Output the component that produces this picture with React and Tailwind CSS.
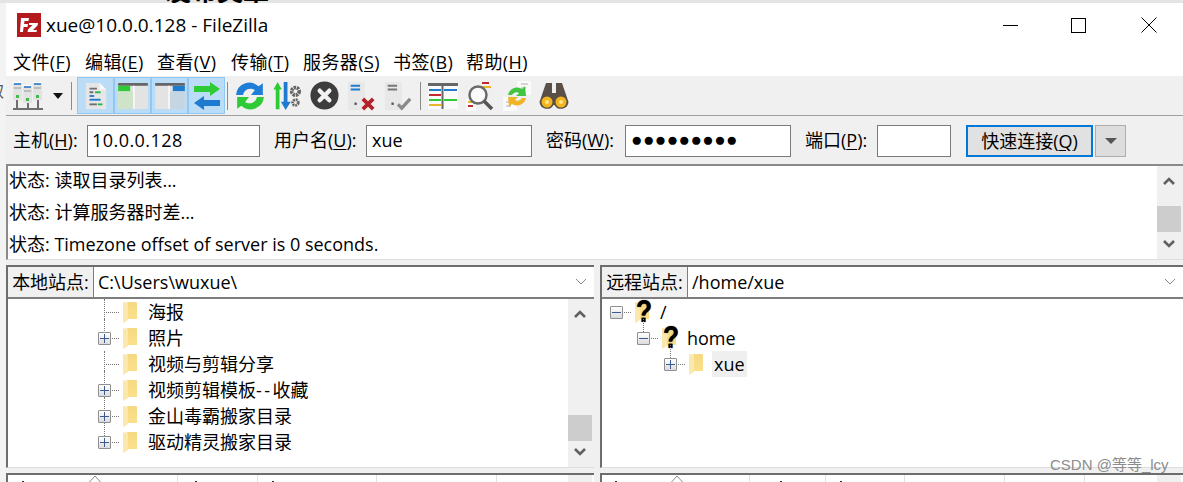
const CJK = "font-['Open_Sans','Noto_Sans_CJK_SC',sans-serif]";

function U({ children }) {
  return <span className="underline underline-offset-2">{children}</span>;
}

function Folder({ question }) {
  return (
    <span className="relative block h-[22px] w-[16px] shrink-0">
      <svg width="16" height="22" viewBox="0 0 16 22" className="block">
        <defs>
          <linearGradient id="fb" x1="0" y1="0" x2="0" y2="1">
            <stop offset="0" stopColor="#f6d982" />
            <stop offset="1" stopColor="#fbe08c" />
          </linearGradient>
        </defs>
        <path d="M4 1h9.500l.500.500V18H4z" fill="url(#fb)" />
        <path d="M0 1l5 1V19l-5 3z" fill="#fbe8ad" />
      </svg>
      {question && (
        <span className="absolute left-[1px] top-[-5px] origin-left scale-x-[0.85] font-['Liberation_Sans',sans-serif] text-[31px] font-bold leading-[31px] text-black [text-shadow:0_0_1px_#000]">?</span>
      )}
    </span>
  );
}

function Box({ plus }) {
  return (
    <span className="relative block h-[13px] w-[13px] shrink-0 rounded-[1px] border border-[#8f8f8f] bg-gradient-to-b from-white to-[#dcdcdc]">
      <span className="absolute left-[1px] top-[5px] h-px w-[9px] bg-[#3b5a94]" />
      {plus && <span className="absolute left-[5px] top-[1px] h-[9px] w-px bg-[#3b5a94]" />}
    </span>
  );
}

function TreeRow({ indent, expander, text, question, selected, vUp, vDown }) {
  return (
    <div className="relative flex h-[26px] items-center" style={{ paddingLeft: indent }}>
      <span className="relative flex w-[25px] shrink-0 items-center">
        {(vUp || vDown) && (
          <span
            className="absolute left-[6px] h-[26px] border-l border-dotted border-[#777]"
            style={{ top: vUp ? -13 : 0, height: vUp && vDown ? 26 : 13 }}
          />
        )}
        {expander ? (
          <span className="relative z-10 flex items-center">
            <Box plus={expander === "plus"} />
            <span className="ml-px w-[7px] border-t border-dotted border-[#777]" />
          </span>
        ) : (
          <span className="ml-[6px] w-[15px] border-t border-dotted border-[#777]" />
        )}
      </span>
      <Folder question={question} />
      <span className={`ml-[7px] flex h-[26px] items-center whitespace-nowrap px-[2px] text-[18px] text-black ${selected ? "bg-[#efefef]" : ""}`}>
        {text}
      </span>
    </div>
  );
}

function Chevron({ up, small }) {
  return (
    <svg width="14" height="10" viewBox="0 0 14 10">
      <path d={up ? "M2 8 7 3l5 5" : "M2 2l5 5 5-5"} fill="none" stroke={small ? "#8a8a8a" : "#606060"} strokeWidth={small ? 1 : 2.6} />
    </svg>
  );
}

function VScroll({ thumbTop, h }) {
  return (
    <div className="flex w-6 shrink-0 flex-col items-center justify-between bg-[#f0f0f0] py-[10px]" style={{ height: h }}>
      <Chevron up />
      <span className="absolute h-[26px] w-6 bg-[#cdcdcd]" style={{ top: thumbTop }} />
      <Chevron />
    </div>
  );
}

function Input({ w, children, className = "" }) {
  return (
    <div className={`flex h-8 shrink-0 items-center border border-[#7a7a7a] bg-white px-[5px] pb-[2px] text-[18px] text-black ${className}`} style={{ width: w }}>
      {children}
    </div>
  );
}

function Label({ w, children }) {
  return (
    <span className="mb-[2px] shrink-0 whitespace-nowrap text-[18px] text-black" style={{ width: w }}>
      {children}
    </span>
  );
}

function SiteManager() {
  return (
    <svg width="32" height="32" viewBox="0 0 32 32">
      {[[1, 2], [11, 5], [21, 2]].map(([x, y], i) => (
        <g key={i}>
          <rect x={x} y={y} width="9" height="18" fill="#e2e2e2" />
          <rect x={x} y={y} width="9" height="1" fill="#fff" />
          <rect x={x + 1} y={y + 1} width="7" height="2" fill="#4f8ccb" />
          <rect x={x + 1} y={y + 5} width="7" height="2" fill="#bdbdbd" />
          <rect x={x + 3} y={y + 13} width="3" height="3" fill="#3fbb4a" />
        </g>
      ))}
      <path d="M1 29h30M5 20v9M16 23v6M26 20v9" stroke="#6e6e6e" strokeWidth="2" fill="none" />
    </svg>
  );
}

function Msg() {
  return (
    <svg width="26" height="30" viewBox="0 0 28 32">
      <path d="M3 2h15l7 7v21H3z" fill="#e6e6e6" />
      <path d="M18 2l7 7h-7z" fill="#fafafa" />
      <path d="M7 8h8M7 12h4" stroke="#6e6e6e" strokeWidth="2" />
      <path d="M13 12h6" stroke="#25b44a" strokeWidth="2" />
      <path d="M7 16h5" stroke="#1d7bd0" strokeWidth="2" />
      <path d="M7 20h12" stroke="#1d7bd0" strokeWidth="2" />
      <path d="M7 25h8" stroke="#6e6e6e" strokeWidth="2" />
      <path d="M16 25h5" stroke="#25b44a" strokeWidth="2" />
    </svg>
  );
}

function Pane({ kind }) {
  return (
    <svg width="30" height="26" viewBox="0 0 32 28">
      <rect x="0" y="0" width="32" height="28" rx="1" fill="#e3e3e3" />
      <rect x="0" y="0" width="32" height="3" fill="#666" />
      {kind === "left" ? (
        <>
          <rect x="0" y="3" width="13" height="6" fill="#2ecb37" />
          <rect x="0" y="9" width="16" height="19" fill="#cfe3c9" />
          <rect x="16" y="3" width="2" height="25" fill="#f6f6f6" />
        </>
      ) : (
        <>
          <rect x="19" y="3" width="13" height="6" fill="#1d7bd0" />
          <rect x="16" y="9" width="16" height="19" fill="#c6d5e2" />
          <rect x="14" y="3" width="2" height="25" fill="#f6f6f6" />
        </>
      )}
    </svg>
  );
}

function Transfer() {
  return (
    <svg width="30" height="28" viewBox="0 0 30 28">
      <path d="M2 4h16V0l10 7-10 7v-4H2z" fill="#2ecb37" />
      <path d="M28 18H12v-4L2 21l10 7v-4h16z" fill="#1d7bd0" />
    </svg>
  );
}

function Refresh() {
  return (
    <svg width="30" height="30" viewBox="2 2 28 28">
      <path d="M3 15A12.500 12.500 0 0 1 24 7l4-3v11H17l3.500-4.500a7 7 0 0 0-11 4.500z" fill="#1f7fd8" />
      <path d="M29 17A12.500 12.500 0 0 1 8 25l-4 3V17h11l-3.500 4.500a7 7 0 0 0 11-4.500z" fill="#2ecb37" />
    </svg>
  );
}

function SyncGears() {
  return (
    <svg width="30" height="30" viewBox="0 0 32 32">
      <path d="M6 1l4.500 8H8v21H4V9H1.500z" fill="#2ecb37" />
      <path d="M12.500 1h4v21H20l-5.500 9L9.500 22h3z" fill="#1d7bd0" />
      <circle cx="25" cy="11" r="4" fill="none" stroke="#666" strokeWidth="4" strokeDasharray="2.500 .8" />
      <circle cx="25" cy="23" r="3" fill="none" stroke="#666" strokeWidth="3" strokeDasharray="2 .8" />
    </svg>
  );
}

function Cancel() {
  return (
    <svg width="29" height="29" viewBox="0 0 30 30">
      <circle cx="15" cy="15" r="14.500" fill="#3d3d3d" />
      <path d="M10 10l10 10M20 10 10 20" stroke="#f2f2f2" strokeWidth="4.500" strokeLinecap="round" />
    </svg>
  );
}

function DocMark({ bar, mark }) {
  return (
    <svg width="30" height="30" viewBox="0 0 30 32">
      <path d="M1 1h18v30H1z" fill="#e8e8e8" />
      <path d="M4 5h10M4 9h10" stroke={bar} strokeWidth="2" />
      <rect x="8" y="23" width="2.500" height="2.500" fill="#555" />
      {mark === "x" ? (
        <path d="M17 19l11 11M28 19 17 30" stroke="#b3222b" strokeWidth="4" />
      ) : (
        <path d="M15 25l4 4 9-10" stroke="#8a8a8a" strokeWidth="3.500" fill="none" />
      )}
    </svg>
  );
}

function Filter() {
  return (
    <svg width="30" height="28" viewBox="0 0 30 28">
      <rect x="0" y="1" width="30" height="26" fill="#fafafa" />
      <rect x="0" y="1" width="30" height="3" fill="#666" />
      <path d="M1 8h12" stroke="#1d7bd0" strokeWidth="2" />
      <path d="M1 13h12" stroke="#c4282f" strokeWidth="2" />
      <path d="M1 18h12" stroke="#2ecb37" strokeWidth="2" />
      <path d="M1 23h12" stroke="#eab52b" strokeWidth="2" />
      <path d="M16 8h13" stroke="#1d7bd0" strokeWidth="2" />
      <path d="M16 18h13" stroke="#2ecb37" strokeWidth="2" />
      <path d="M14.500 4v23" stroke="#666" strokeWidth="2" />
    </svg>
  );
}

function Search() {
  return (
    <svg width="30" height="32" viewBox="0 0 30 32">
      <rect x="14" y="1" width="14" height="14" fill="#efefef" />
      <path d="M17 3h7" stroke="#c4282f" strokeWidth="2" />
      <path d="M17 7h9" stroke="#eab52b" strokeWidth="2" />
      <rect x="1" y="19" width="10" height="12" fill="#fafafa" />
      <path d="M3 22h5" stroke="#eab52b" strokeWidth="2" />
      <path d="M3 26h5" stroke="#c4282f" strokeWidth="2" />
      <circle cx="13" cy="15" r="8.500" fill="#fff" fillOpacity=".7" stroke="#6a6a6a" strokeWidth="2.500" />
      <path d="M19 21l8 8" stroke="#555" strokeWidth="3.500" />
    </svg>
  );
}

function SyncBrowse() {
  return (
    <svg width="30" height="32" viewBox="0 0 30 32">
      <rect x="15" y="1" width="14" height="14" fill="#fafafa" />
      <rect x="1" y="17" width="14" height="14" fill="#fafafa" />
      <path d="M19 4h7M19 8h5M4 22h7M4 26h5" stroke="#c9c9c9" strokeWidth="1.500" />
      <path d="M6 15A9 9 0 0 1 20 9l3-3 1 10H14l3-3a5 5 0 0 0-7 2z" fill="#43c443" />
      <path d="M24 18a9 9 0 0 1-14 6l-3 3-1-10h10l-3 3a5 5 0 0 0 7-2z" fill="#f0b429" />
    </svg>
  );
}

function Binoculars() {
  return (
    <svg width="30" height="28" viewBox="0 0 30 28">
      <path d="M7 1h6v10h4V1h6l6.500 19a7.500 7.500 0 0 1-14 3h-1a7.500 7.500 0 0 1-14-3z" fill="#5b5048" />
      <circle cx="8" cy="20" r="5.500" fill="#f3b61f" />
      <circle cx="22" cy="20" r="5.500" fill="#f3b61f" />
      <circle cx="8" cy="20" r="2" fill="#fde38a" />
      <circle cx="22" cy="20" r="2" fill="#fde38a" />
    </svg>
  );
}

function Sep() {
  return <span className="block h-[28px] w-px shrink-0 bg-[#8a8a8a]" />;
}

function Lit({ children }) {
  return (
    <span className="flex h-[37px] w-[37px] items-center justify-center border border-[#8fc8f5] bg-[#bbdcf6]">
      {children}
    </span>
  );
}

function Cell({ children }) {
  return <span className="flex w-[30px] shrink-0 items-center justify-center">{children}</span>;
}

function LogRow({ children }) {
  return <div className="h-8 whitespace-nowrap pl-[1px] text-[18px] leading-[32px] text-black">{children}</div>;
}

function ListHeader({ cols, arrow, marks, tail }) {
  return (
    <div className="relative flex h-[9px] min-w-0 flex-1 overflow-hidden border-t-2 border-l-2 border-[#6d6d6d] bg-white">
      {cols.map((c, i) => (
        <span key={i} className="h-full shrink-0 border-r border-[#e2e2e2]" style={{ width: c }} />
      ))}
      <svg width="12" height="7" viewBox="0 0 12 7" className="absolute top-0" style={{ left: arrow }}>
        <path d="M.5 7l5.500-6 5.500 6" fill="none" stroke="#8a8a8a" />
      </svg>
      {marks.map((m) => (
        <span key={m} className="absolute bottom-0 h-px w-[2px] bg-[#333]" style={{ left: m }} />
      ))}
      <span className="absolute inset-y-0 bg-[#f0f0f0]" style={{ width: 24, right: tail }} />
    </div>
  );
}

const menu = [
  ["文件", "F", 72],
  ["编辑", "E", 72],
  ["查看", "V", 74],
  ["传输", "T", 72],
  ["服务器", "S", 90],
  ["书签", "B", 73],
  ["帮助", "H", 70],
];

export default function App() {
  return (
    <div className={`relative flex h-[482px] w-[1183px] flex-col overflow-hidden bg-[#f0f0f0] text-black ${CJK}`}>
      <div className="relative h-[3px] shrink-0 overflow-hidden bg-[#e4e4e4]">
        <span className="absolute left-[165px] top-[-22px] whitespace-nowrap text-[26px] font-bold leading-[26px]">发布文章</span>
      </div>
      <div className="flex min-h-0 flex-1">
        <div className="relative w-[6px] shrink-0 overflow-hidden bg-[#f3f3f3]">
          <span className="absolute left-[-12px] top-[76px] text-[16px] text-[#555]">取</span>
        </div>
        <div className="flex min-w-0 flex-1 flex-col">
          <div className="flex h-[40px] shrink-0 items-center bg-white pl-[11px] pt-[4px]">
            <svg width="24" height="24" viewBox="0 0 24 24" className="shrink-0">
              <rect width="24" height="24" fill="#b3191d" />
              <path d="M4 5h8l-.500 3H7.500l-.400 3H11l-.500 3H6.600L6 19H3zM12 10h9l-.500 2.500L16 17h4l-.500 2h-9l.500-2.500L15.500 12H12z" fill="#fff" />
            </svg>
            <span className="ml-[5px] whitespace-nowrap text-[19px]">xue@10.0.0.128 - FileZilla</span>
            <span className="flex-1" />
            <span className="flex w-[64px] items-center justify-center">
              <span className="h-px w-[15px] bg-black" />
            </span>
            <span className="flex w-[73px] items-center justify-center">
              <span className="h-[15px] w-[15px] border border-black" />
            </span>
            <span className="flex w-[68px] items-center justify-center">
              <svg width="16" height="16" viewBox="0 0 16 16">
                <path d="M.5.5l15 15M15.500.5l-15 15" stroke="#000" strokeWidth="1" />
              </svg>
            </span>
          </div>
          <div className="flex h-[33px] shrink-0 items-center bg-white pl-[7px] pt-[6px] text-[18px]">
            {menu.map(([t, k, w]) => (
              <span key={k} className="whitespace-nowrap tracking-[0.4px]" style={{ width: w }}>
                {t}(<U>{k}</U>)
              </span>
            ))}
          </div>
          <div className="flex h-[40px] shrink-0 items-center border-b border-[#a0a0a0] bg-[#f0f0f0] pl-[6px]">
            <SiteManager />
            <svg width="12" height="8" viewBox="0 0 12 8" className="ml-[8px]"><path d="M1 1h10L6 7z" fill="#111" /></svg>
            <span className="ml-[7px] mr-[5px]"><Sep /></span>
            <Lit><Msg /></Lit>
            <Lit><Pane kind="left" /></Lit>
            <Lit><Pane kind="right" /></Lit>
            <Lit><Transfer /></Lit>
            <span className="mx-[2px]"><Sep /></span>
            <div className="ml-[5px] flex items-center gap-[7px]">
              <Cell><Refresh /></Cell>
              <Cell><SyncGears /></Cell>
              <Cell><Cancel /></Cell>
              <Cell><DocMark bar="#1d7bd0" mark="x" /></Cell>
              <Cell><DocMark bar="#777" mark="check" /></Cell>
              <Sep />
              <Cell><Filter /></Cell>
              <Cell><Search /></Cell>
              <Cell><SyncBrowse /></Cell>
              <Cell><Binoculars /></Cell>
            </div>
          </div>
          <div className="flex h-[48px] shrink-0 items-center bg-[#f0f0f0] pl-[7px] pt-[2px]">
            <Label w={74}>主机(<U>H</U>):</Label>
            <Input w={173}><span className="-ml-[1px] tracking-[0.45px]">10.0.0.128</span></Input>
            <span className="w-[14px]" />
            <Label w={92}>用户名(<U>U</U>):</Label>
            <Input w={166}>xue</Input>
            <span className="w-[14px]" />
            <Label w={79}>密码(<U>W</U>):</Label>
            <Input w={166} className="font-['Liberation_Sans',sans-serif]">
              <span className="text-[19px] tracking-[0.4px]">●●●●●●●●●</span>
            </Input>
            <span className="w-[14px]" />
            <Label w={72}>端口(<U>P</U>):</Label>
            <Input w={74} />
            <span className="w-[15px]" />
            <button className="flex h-8 w-[127px] items-center justify-center border-2 border-[#0078d7] bg-[#e1e1e1] text-[18px]">
              快速连接(<U>Q</U>)
            </button>
            <span className="ml-[2px] flex h-8 w-[31px] items-center justify-center border border-[#adadad] bg-[#dddddd]">
              <svg width="14" height="8" viewBox="0 0 14 8"><path d="M1 1h12L7 7z" fill="#555" /></svg>
            </span>
          </div>
          <div className="relative flex h-[96px] shrink-0 border-t-2 border-l-2 border-b border-[#8a8a8a] border-b-[#dedede] bg-white">
            <div className="-mt-[2px] min-w-0 flex-1">
              <LogRow>状态: 读取目录列表...</LogRow>
              <LogRow>状态: 计算服务器时差...</LogRow>
              <LogRow>状态: Timezone offset of server is 0 seconds.</LogRow>
            </div>
            <VScroll thumbTop={40} h={93} />
            <span className="w-[2px] bg-[#f0f0f0]" />
          </div>
          <div className="flex h-[208px] shrink-0 gap-[6px] pt-[5px]">
            <div className="relative flex w-[588px] shrink-0 flex-col border-t-[2px] border-l-2 border-b border-[#6d6d6d] border-b-[#dedede] bg-white">
              <div className="flex h-[32px] shrink-0 items-stretch border-b-2 border-[#7d7d7d] text-[18px]">
                <span className="flex w-[86px] items-center justify-center border-r border-[#7d7d7d] bg-[#f0f0f0]">本地站点:</span>
                <span className="flex flex-1 items-center pl-[4px]">C:\Users\wuxue\</span>
                <span className="flex w-[26px] items-center justify-center"><Chevron small /></span>
              </div>
              <div className="relative flex min-h-0 flex-1">
                <div className="min-w-0 flex-1 pl-[90px]">
                  <TreeRow text="海报" vUp vDown />
                  <TreeRow text="照片" expander="plus" vUp vDown />
                  <TreeRow text="视频与剪辑分享" vUp vDown />
                  <TreeRow text={<>视频剪辑模板<span className="tracking-[2.5px]">--</span>收藏</>} expander="plus" vUp vDown />
                  <TreeRow text="金山毒霸搬家目录" expander="plus" vUp vDown />
                  <TreeRow text="驱动精灵搬家目录" expander="plus" vUp />
                </div>
                <VScroll thumbTop={116} h={168} />
                <span className="w-[2px] bg-[#f0f0f0]" />
              </div>
            </div>
            <div className="relative flex min-w-0 flex-1 flex-col border-t-[2px] border-l-2 border-b border-[#6d6d6d] border-b-[#dedede] bg-white">
              <div className="flex h-[32px] shrink-0 items-stretch border-b-2 border-[#7d7d7d] text-[18px]">
                <span className="flex w-[86px] items-center justify-center border-r border-[#7d7d7d] bg-[#f0f0f0]">远程站点:</span>
                <span className="flex flex-1 items-center pl-[4px]">/home/xue</span>
                <span className="flex w-[26px] items-center justify-center"><Chevron small /></span>
              </div>
              <div className="min-h-0 flex-1 pl-[8px]">
                <TreeRow text="/" expander="minus" question />
                <TreeRow indent={27} text="home" expander="minus" question vUp />
                <TreeRow indent={54} text="xue" expander="plus" selected vUp />
              </div>
            </div>
          </div>
          <div className="flex min-h-0 flex-1 gap-[6px] bg-[#f0f0f0] pt-[5px]">
            <div className="flex w-[588px] shrink-0">
              <ListHeader cols={[170, 80, 119, 120]} arrow={81} marks={[14, 187, 264]} tail={2} />
            </div>
            <div className="flex min-w-0 flex-1">
              <ListHeader cols={[148, 76, 79, 100, 80]} arrow={69} marks={[13, 178, 238]} tail={2} />
            </div>
          </div>
        </div>
      </div>
      <span className="absolute left-[1050px] top-[454px] whitespace-nowrap font-['Liberation_Sans','Noto_Sans_CJK_SC',sans-serif] text-[15px] text-[#8c8c8c]">CSDN @等等_lcy</span>
    </div>
  );
}
